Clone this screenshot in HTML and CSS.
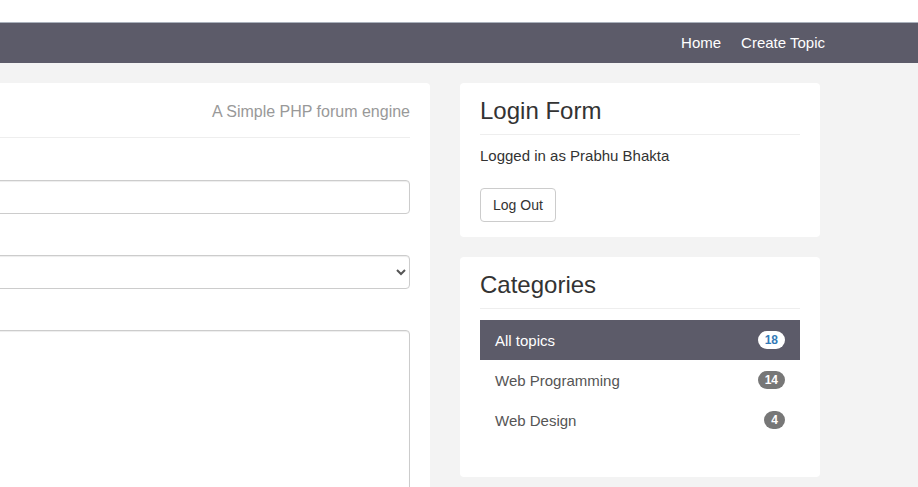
FILE: index.html
```html
<!DOCTYPE html>
<html lang="en">
<head>
<meta charset="utf-8">
<title>Create Topic</title>
<link rel="stylesheet" href="styles.css">
</head>
<body>
<div class="topstrip"></div>
<nav class="navbar">
  <div class="wrap navbar-inner">
    <ul class="nav">
      <li><a href="#">Home</a></li>
      <li><a href="#">Create Topic</a></li>
    </ul>
  </div>
</nav>
<main class="wrap main">
  <section class="col-main">
    <div class="card card-main">
      <div class="main-header">
        <span class="main-sub">A Simple PHP forum engine</span>
      </div>
      <form class="topic-form">
        <div class="form-group">
          <div class="label-space"></div>
          <input class="control" type="text" aria-label="Topic title">
        </div>
        <div class="form-group">
          <div class="label-space"></div>
          <select class="control" aria-label="Category">
            <option></option>
          </select>
        </div>
        <div class="form-group">
          <div class="label-space"></div>
          <textarea class="control area" rows="10" aria-label="Topic body"></textarea>
        </div>
      </form>
    </div>
  </section>
  <aside class="col-side">
    <div class="card side-card">
      <h3 class="side-title">Login Form</h3>
      <p class="logged">Logged in as Prabhu Bhakta</p>
      <button class="btn" type="button">Log Out</button>
    </div>
    <div class="card side-card">
      <h3 class="side-title">Categories</h3>
      <ul class="list">
        <li class="item active"><span>All topics</span><span class="badge">18</span></li>
        <li class="item"><span>Web Programming</span><span class="badge">14</span></li>
        <li class="item"><span>Web Design</span><span class="badge">4</span></li>
      </ul>
    </div>
  </aside>
</main>
</body>
</html>
```

FILE: styles.css
```css
* { box-sizing: border-box; }
html, body { margin: 0; padding: 0; }
body {
  background: #f3f3f3;
  font-family: "Liberation Sans", Arial, Helvetica, sans-serif;
  font-size: 14px;
  line-height: 20px;
  color: #333;
  overflow-x: hidden;
}
.topstrip { height: 22px; background: #fff; }
.wrap { width: 1170px; margin-left: -335px; }
.navbar {
  background: #5c5b69;
  border-top: 1px solid #aab1bc;
  height: 41px;
}
.navbar-inner { display: flex; justify-content: flex-end; }
.nav { list-style: none; margin: 0; padding: 0; display: flex; }
.nav a {
  display: block;
  padding: 10px;
  color: #fff;
  font-size: 15px;
  line-height: 20px;
  text-decoration: none;
}
.main {
  display: grid;
  grid-template-columns: 780px 390px;
  align-items: start;
  margin-top: 20px;
}
.col-main, .col-side { padding: 0 15px; }
.col-side { display: flex; flex-direction: column; gap: 20px; }
.card { background: #fff; border-radius: 4px; }
.card-main { padding: 20px 20px 40px; }
.main-header {
  display: flex;
  justify-content: flex-end;
  line-height: 18px;
  font-size: 16px;
  padding-bottom: 16px;
  border-bottom: 1px solid #eee;
}
.main-sub { color: #999; }
.topic-form { padding-top: 16px; }
.form-group { margin-bottom: 15px; }
.label-space { height: 26px; }
.control {
  display: block;
  width: 100%;
  height: 34px;
  padding: 6px 12px;
  font-family: inherit;
  font-size: 14px;
  color: #555;
  background: #fff;
  border: 1px solid #ccc;
  border-radius: 4px;
  box-shadow: inset 0 1px 1px rgba(0,0,0,0.075);
}
.area { height: 210px; resize: vertical; }
.side-card { padding: 15px 20px; }
.side-title {
  margin: 0 0 10px;
  font-size: 24px;
  line-height: 26px;
  font-weight: 500;
  padding: 0;
}
.logged {
  margin: 0;
  border-top: 1px solid #eee;
  padding-top: 11px;
  font-size: 15px;
}
.btn {
  display: inline-block;
  margin-top: 22px;
  padding: 6px 12px;
  font-family: inherit;
  font-size: 14px;
  line-height: 20px;
  color: #333;
  background: #fff;
  border: 1px solid #ccc;
  border-radius: 4px;
}
.list {
  list-style: none;
  margin: 0 0 22px;
  padding: 11px 0 0;
  border-top: 1px solid #eee;
}
.item {
  display: flex;
  justify-content: space-between;
  align-items: center;
  height: 40px;
  padding: 2px 15px 0;
  font-size: 15px;
  color: #555;
}
.item.active { background: #5c5b69; color: #fff; }
.badge {
  display: inline-block;
  min-width: 10px;
  padding: 3px 7px;
  margin-top: -2px;
  font-size: 12px;
  font-weight: bold;
  line-height: 12px;
  color: #fff;
  background: #777;
  border-radius: 10px;
  text-align: center;
}
.item.active .badge { background: #fff; color: #337ab7; }
```
